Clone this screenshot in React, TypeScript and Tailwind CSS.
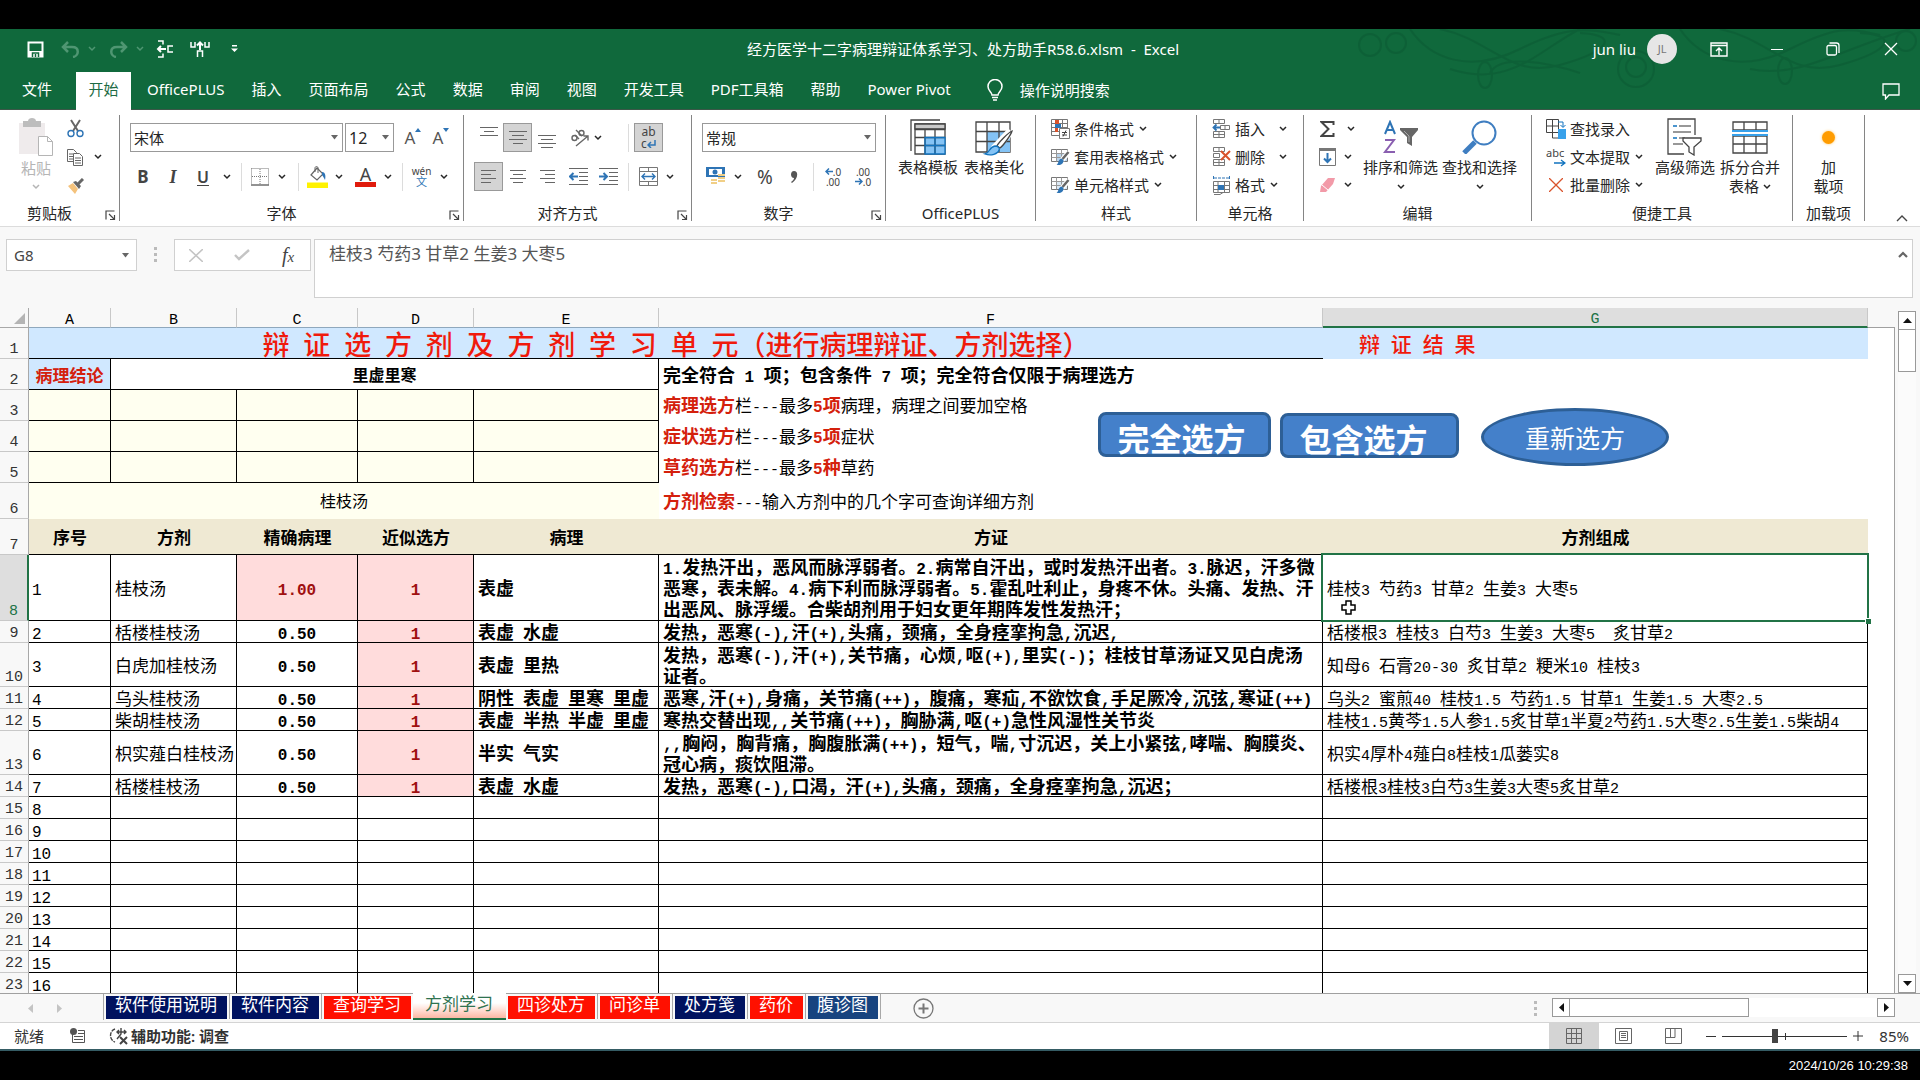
import React from "react";

/* ---------- shared pieces ---------- */

const Chevron = ({ className = "" }: { className?: string }) => (
  <svg className={`shrink-0 ${className}`} width="8" height="6" viewBox="0 0 8 6" fill="none" stroke="currentColor" strokeWidth="1.5">
    <path d="M1 1l3 3 3-3" />
  </svg>
);

const Triangle = ({ className = "" }: { className?: string }) => (
  <svg className={`pointer-events-none absolute ${className}`} width="7" height="5" viewBox="0 0 7 5" fill="#666">
    <path d="M0 0h7L3.500 4.500z" />
  </svg>
);

const Launcher = () => (
  <button aria-label="更多选项" className="flex h-3 w-3 items-center justify-center">
    <svg width="11" height="11" viewBox="0 0 11 11" fill="none" stroke="#444" strokeWidth="1.2">
      <path d="M1 9.500V1h8.500M4 4l5 5M9.500 5v4.500H5" />
    </svg>
  </button>
);

const Group = ({ className, label, launcher, children }: { className: string; label: string; launcher?: boolean; children: React.ReactNode }) => (
  <section aria-label={label} className={`flex h-[106px] shrink-0 flex-col border-r border-[#858585] ${className}`}>
    <div className="flex h-[88px]">{children}</div>
    <div className="flex flex-1 items-end">
      <span className="flex-1 whitespace-nowrap text-center leading-4 text-[#262626]">{label}</span>
      {launcher && (
        <span className="flex h-4 w-5 items-end justify-end pr-[3px]">
          <Launcher />
        </span>
      )}
    </div>
  </section>
);

const Tool = ({ label, className = "", children }: { label: string; className?: string; children: React.ReactNode }) => (
  <button aria-label={label} className={`flex shrink-0 items-center justify-center ${className}`}>
    {children}
  </button>
);

const RowButton = ({ icon, label, chevron }: { icon: React.ReactNode; label: string; chevron?: string }) => (
  <button className="flex h-7 items-center whitespace-nowrap">
    <span className="mr-1 flex w-5 justify-center">{icon}</span>
    {label}
    {chevron && <Chevron className={chevron} />}
  </button>
);

const Rule = ({ className = "" }: { className?: string }) => <span className={`h-7 w-px shrink-0 bg-[#dcdcdc] ${className}`} />;

const Lines = ({ rows, className = "" }: { rows: [number, number][]; className?: string }) => (
  <svg className={className} width="18" height="15" viewBox="0 0 18 15" stroke="#666" strokeWidth="1">
    {rows.map(([a, b], i) => (
      <path key={i} d={`M${a} ${i * 4 + 1.5}H${b}`} />
    ))}
  </svg>
);

/* ---------- icons ---------- */

const GridBrush = ({ shade }: { shade: string }) => (
  <svg width="20" height="20" viewBox="0 0 20 20" fill="none">
    <path d="M1.500 2.500h16v12h-16z" fill="#fff" stroke="#777" />
    <path d="M6 6h11v8H6z" fill={shade} />
    <path d="M1.500 6.500h16M1.500 10.500h16M6.500 2.500v12M11.500 2.500v12" stroke="#999" />
    <path d="M19 5l-7 8" stroke="#fff" strokeWidth="5" />
    <path d="M18.500 5l-6 7" stroke="#666" strokeWidth="2.500" />
    <path d="M11 11.500c2 .5 3 1.500 2.500 3-1 3-3.500 4-7 3.500 2-1 1.500-5 4.500-6.500z" fill="#2e74b5" />
  </svg>
);

const CellsIcon = ({ kind }: { kind: "insert" | "delete" | "format" }) => (
  <svg width="19" height="20" viewBox="0 0 19 20" fill="none" stroke="#777">
    {kind === "format" ? (
      <>
        <path d="M1.500 1v4M17.500 1v4M2 3h15" stroke="#2e74b5" strokeDasharray="3 1" />
        <path d="M1.500 6.500h16v11h-16zM1.500 10.500h16M1.500 14.500h16M6 6.500v11M12.500 6.500v11" />
        <path d="M6 10h6v5H6z" fill="#2e74b5" stroke="none" />
        <path d="M2 19.500h6l3-2" />
      </>
    ) : (
      <>
        <path d="M1.500 .5h11v4h-11zM7 .5v4M1.500 12.500h11v6h-11zM7 12.500v6M1.500 15.500h11" />
        {kind === "insert" ? (
          <>
            <path d="M8.500 6.500h9v4h-9zM13 6.500v4" />
            <path d="M8 8.500H2M4.500 5.500l-3 3 3 3" stroke="#2e74b5" strokeWidth="1.800" />
          </>
        ) : (
          <>
            <path d="M1.500 6.500h6v4h-6z" />
            <path d="M9 4l9 9M18 4l-9 9" stroke="#d9532c" strokeWidth="2" />
          </>
        )}
      </>
    )}
  </svg>
);

/* ---------- title bar and tabs ---------- */

const Flourish = () => (
  <svg className="absolute right-0 top-0" width="570" height="64" viewBox="0 0 570 64" fill="none" stroke="#0c5a33" strokeWidth="2" opacity=".55">
    <circle cx="20" cy="16" r="11" />
    <circle cx="46" cy="14" r="10" />
    <path d="M60 0c20 30 60 45 110 20S240 0 270 6M90 0c50 10 70 50 120 36s60-30 20-32M100 40c60 20 90-20 130-40M140 44c10-20 60-10 90 0" />
    <ellipse cx="135" cy="46" rx="7" ry="13" />
    <circle cx="286" cy="40" r="18" />
    <circle cx="286" cy="38" r="10" />
    <path d="M330 0c20 30 60 45 110 20S500 0 530 6M370 0c50 10 70 50 120 36s60-30 20-32M400 40c50 10 90-20 160-40" />
    <ellipse cx="435" cy="42" rx="7" ry="13" />
    <circle cx="556" cy="12" r="10" />
  </svg>
);

const TitleBar = () => (
  <div className="relative flex h-10 items-center text-white">
    <div className="flex flex-1 items-center pl-[26px]">
      <Tool label="保存" className="w-[18px]">
        <svg width="17" height="17" viewBox="0 0 17 17" fill="none" stroke="#fff" strokeWidth="2">
          <path d="M1.500 1.500h14v14h-14z" />
          <path d="M2 10h13v5H2z" fill="#fff" stroke="none" />
          <path d="M5.500 16v-4h6v4M8.500 13v3" stroke="#10693c" strokeWidth="1.500" />
        </svg>
      </Tool>
      <Tool label="撤消" className="ml-4 w-5 text-[#4f9672]">
        <svg width="19" height="17" viewBox="0 0 19 17" fill="none" stroke="currentColor" strokeWidth="2.500">
          <path d="M7 1L2 6l5 5M2 6h9c8 0 7 9 1 10" />
        </svg>
      </Tool>
      <Tool label="撤消列表" className="ml-2 w-2 text-[#4f9672]"><Chevron /></Tool>
      <Tool label="恢复" className="ml-3 w-5 text-[#4f9672]">
        <svg width="19" height="17" viewBox="0 0 19 17" fill="none" stroke="currentColor" strokeWidth="2.500">
          <path d="M12 1l5 5-5 5M17 6H8C0 6 1 15 7 16" />
        </svg>
      </Tool>
      <Tool label="恢复列表" className="ml-2 w-2 text-[#4f9672]"><Chevron /></Tool>
      <Tool label="插入单元格" className="ml-3 w-[18px]">
        <svg width="18" height="18" viewBox="0 0 18 18" fill="none" stroke="#fff" strokeWidth="1.500">
          <path d="M2 1h5v3.500M7 13.500V17H2M17 6h-5v6h5" />
          <path d="M10 9H2M5 6L2 9l3 3" strokeWidth="2" />
        </svg>
      </Tool>
      <Tool label="插入列" className="ml-4 w-5">
        <svg width="20" height="16" viewBox="0 0 20 16" fill="none" stroke="#fff" strokeWidth="1.500">
          <path d="M1 1v5h4V1M15 1v5h4V1M7.500 16v-6h5v6" />
          <path d="M10 9V2M7 4.500l3-3 3 3" strokeWidth="2" />
        </svg>
      </Tool>
      <Tool label="自定义快速访问工具栏" className="ml-[18px] w-3">
        <svg width="7" height="8" viewBox="0 0 7 8" fill="#fff">
          <path d="M1 0h5v1.500H1zM0 3.500h7L3.500 7z" />
        </svg>
      </Tool>
    </div>
    <h1 className="whitespace-pre">经方医学十二字病理辩证体系学习、处方助手R58.6.xlsm  -  Excel</h1>
    <div className="relative flex flex-1 items-center justify-end pr-5">
      <span>jun liu</span>
      <span className="ml-[11px] flex h-[30px] w-[30px] items-center justify-center rounded-full bg-[#e6e6e6] text-[11px] text-[#777]">JL</span>
      <Tool label="功能区显示选项" className="ml-[33px] w-[18px]">
        <svg width="18" height="15" viewBox="0 0 18 15" fill="none" stroke="#fff" strokeWidth="1.400">
          <path d="M1 1h16v13H1zM1 3.500h16M9 13V6M6 9l3-3 3 3" />
        </svg>
      </Tool>
      <Tool label="最小化" className="ml-10 w-[18px]"><span className="h-px w-3 bg-white" /></Tool>
      <Tool label="还原" className="ml-[38px] w-[18px]">
        <svg width="14" height="14" viewBox="0 0 14 14" fill="none" stroke="#fff" strokeWidth="1.300">
          <rect x="1" y="3.500" width="9.500" height="9.500" rx="1.500" />
          <path d="M3.500 1h7c1.500 0 2.500 1 2.500 2.500V11" />
        </svg>
      </Tool>
      <Tool label="关闭" className="ml-10 w-[18px]">
        <svg width="14" height="14" viewBox="0 0 14 14" stroke="#fff" strokeWidth="1.300">
          <path d="M1 1l12 12M13 1L1 13" />
        </svg>
      </Tool>
    </div>
  </div>
);

const menus = ["OfficePLUS", "插入", "页面布局", "公式", "数据", "审阅", "视图", "开发工具", "PDF工具箱", "帮助", "Power Pivot"];

const MenuTabs = () => (
  <nav className="relative mt-[3px] flex h-[38px] items-start whitespace-nowrap border-b border-[#3c5748] text-white">
    <button className="ml-[22px] h-[33px]">文件</button>
    <button className="ml-6 h-[38px] w-[55px] bg-white pb-[5px] text-[#1d6b44]">开始</button>
    <div className="ml-4 flex h-[33px] gap-[27px]">
      {menus.map((m) => (
        <button key={m}>{m}</button>
      ))}
    </div>
    <button className="ml-9 flex h-[35px] items-center gap-[17px]">
      <svg width="16" height="22" viewBox="0 0 16 22" fill="none" stroke="#fff" strokeWidth="1.500">
        <path d="M5 16c0-3-4-4-4-8.500a7 7 0 0 1 14 0C15 12 11 13 11 16zM5 18.500h6M6 21h4" />
      </svg>
      操作说明搜索
    </button>
    <button aria-label="批注" className="ml-auto mr-5 h-[38px]">
      <svg width="18" height="17" viewBox="0 0 18 17" fill="none" stroke="#fff" strokeWidth="1.300">
        <path d="M1 1h16v11H7l-3.500 4V12H1z" />
      </svg>
    </button>
  </nav>
);

/* ---------- ribbon ---------- */

const Clipboard = () => (
  <Group label="剪贴板" launcher className="w-[120px]">
    <button className="flex w-[58px] flex-col items-center pl-[14px] text-[#b5b5b5]">
      <svg className="mt-[3px]" width="36" height="38" viewBox="0 0 36 38">
        <path d="M1 5h26v31H1z" fill="#efebec" />
        <path d="M5 3h5c0-4 8-4 8 0h5v6H5z" fill="#bdbdbd" />
        <path d="M20.500 18.500h9l5 5v14h-14z" fill="#fff" stroke="#b5b5b5" />
        <path d="M29.500 18.500v5h5" fill="none" stroke="#b5b5b5" />
      </svg>
      <span className="mt-[2px] leading-5">粘贴</span>
      <Chevron className="mt-[6px]" />
    </button>
    <div className="flex flex-col pl-[7px]">
      <Tool label="剪切" className="h-[27px] w-5">
        <svg width="17" height="19" viewBox="0 0 17 19" fill="none">
          <path d="M4 1l7 11M13 1L6 12" stroke="#666" strokeWidth="2" />
          <circle cx="4" cy="14.500" r="3" stroke="#2e74b5" strokeWidth="1.400" />
          <circle cx="13" cy="14.500" r="3" stroke="#2e74b5" strokeWidth="1.400" />
        </svg>
      </Tool>
      <div className="flex h-[30px] items-center">
        <Tool label="复制" className="w-5">
          <svg width="18" height="19" viewBox="0 0 18 19" fill="#fff" stroke="#666">
            <path d="M1.500 1.500h6l3 3v9h-9zM3 6h4M3 8.500h4M3 11h4" />
            <path d="M7.500 5.500h6l3 3v9h-9zM9 10h6M9 12.500h6M9 15h6" />
          </svg>
        </Tool>
        <Chevron className="ml-[9px]" />
      </div>
      <Tool label="格式刷" className="h-7 w-5">
        <svg width="17" height="16" viewBox="0 0 17 16">
          <path d="M1 8l5-3 5 6-3 5z" fill="#f4c27c" />
          <path d="M6 4l3-1 5 5-2 3z" fill="#666" />
          <path d="M11 6l5-5" stroke="#666" strokeWidth="3" />
        </svg>
      </Tool>
    </div>
  </Group>
);

const FontGroup = () => (
  <Group label="字体" launcher className="w-[344px]">
    <div className="flex flex-col gap-[10px] pl-[10px] pt-2">
      <div className="flex h-[29px] items-center">
        <div className="relative">
          <select aria-label="字体" className="h-[29px] w-[213px] appearance-none border border-[#999] bg-white pl-[3px]">
            <option>宋体</option>
          </select>
          <Triangle className="right-[5px] top-3" />
        </div>
        <div className="relative ml-[2px]">
          <select aria-label="字号" className="h-[29px] w-[49px] appearance-none border border-[#999] bg-white pl-[3px] text-base">
            <option>12</option>
          </select>
          <Triangle className="right-[5px] top-3" />
        </div>
        <Tool label="增大字号" className="ml-[7px] w-6 items-start text-[17px] text-[#555]">
          A<svg width="6" height="4" viewBox="0 0 6 4" fill="#2e74b5"><path d="M0 4h6L3 0z" /></svg>
        </Tool>
        <Tool label="减小字号" className="ml-1 w-6 items-start text-[17px] text-[#555]">
          A<svg width="6" height="4" viewBox="0 0 6 4" fill="#2e74b5"><path d="M0 0h6L3 4z" /></svg>
        </Tool>
      </div>
      <div className="flex h-[29px] items-center">
        <Tool label="加粗" className="w-[26px] text-[17px] font-bold text-[#444]">B</Tool>
        <Tool label="倾斜" className="ml-1 w-[26px] font-[family-name:'Liberation_Serif',serif] text-lg font-bold italic text-[#444]">I</Tool>
        <Tool label="下划线" className="ml-1 w-[26px] text-base font-semibold text-[#444] underline underline-offset-2">U</Tool>
        <Chevron className="ml-[7px]" />
        <Rule className="ml-[10px]" />
        <Tool label="边框" className="ml-[9px] w-[18px]">
          <svg width="18" height="18" viewBox="0 0 18 18" fill="none" stroke="#777">
            <path d="M.5 .5h17v16M.5 .5v16M9 1v15M1 8.500h16" strokeDasharray="1 1" />
            <path d="M0 17h18" strokeWidth="1.600" />
          </svg>
        </Tool>
        <Chevron className="ml-[9px]" />
        <Rule className="ml-3" />
        <Tool label="填充颜色" className="ml-2 w-[21px]">
          <svg width="21" height="22" viewBox="0 0 21 22">
            <path d="M4 9l6-7 6 6-6 6z" fill="#fff" stroke="#666" strokeWidth="1.200" />
            <path d="M8 6V2c0-2 3-2 3 0v5" fill="none" stroke="#666" />
            <path d="M15 6c3 0 4 3 3 8-1-2-2-4-3-5z" fill="#2e74b5" />
            <path d="M0 16.500h21V22H0z" fill="#fff200" />
          </svg>
        </Tool>
        <Chevron className="ml-[7px]" />
        <Tool label="字体颜色" className="ml-3 w-[21px] flex-col text-lg leading-[16px] text-[#444]">
          A<span className="h-[5px] w-[21px] bg-[#e01b0c]" />
        </Tool>
        <Chevron className="ml-2" />
        <Rule className="ml-[10px]" />
        <Tool label="拼音指南" className="ml-2 w-[21px] flex-col text-[10px] leading-[10px] text-[#444]">
          wén<span className="text-[11px] leading-[12px] text-[#2e74b5]">文</span>
        </Tool>
        <Chevron className="ml-[8px]" />
      </div>
    </div>
  </Group>
);

const Indent = ({ out }: { out?: boolean }) => (
  <svg width="19" height="17" viewBox="0 0 19 17" fill="none" stroke="#666">
    <path d="M0 .5h19M10 4.500h9M10 8.500h9M10 12.500h9M0 16.500h19" />
    <path d={out ? "M9 8.500H1M4.500 5L1 8.500l3.500 3.500" : "M0 8.500h8M4.500 5L8 8.500 4.500 12"} stroke="#2e74b5" strokeWidth="2" />
  </svg>
);

const Alignment = () => (
  <Group label="对齐方式" launcher className="w-[228px]">
    <div className="flex flex-col gap-[10px] pl-[10px] pt-2">
      <div className="flex h-[29px] items-center">
        <Tool label="顶端对齐" className="h-[29px] w-[29px]"><Lines className="mb-2" rows={[[0, 18], [4, 14], [0, 18]]} /></Tool>
        <Tool label="垂直居中" className="h-[29px] w-[29px] border border-[#999] bg-[#d4d4d4]"><Lines rows={[[0, 18], [3, 15], [0, 18], [4, 14]]} /></Tool>
        <Tool label="底端对齐" className="h-[29px] w-[29px]"><Lines className="mt-2" rows={[[0, 18], [3, 15], [0, 18], [3, 15]]} /></Tool>
        <Tool label="方向" className="ml-2 w-[21px]">
          <svg width="20" height="20" viewBox="0 0 20 20" fill="none" stroke="#666" strokeWidth="1.400">
            <circle cx="4.500" cy="10" r="2.500" />
            <path d="M5 7l4 4M6 2l6 6" />
            <circle cx="11.500" cy="5" r="2.500" />
            <path d="M6 18L18 8M13.500 8H18v4.500" />
          </svg>
        </Tool>
        <Chevron className="ml-1" />
        <Rule className="ml-[26px]" />
        <Tool label="自动换行" className="ml-[5px] h-[29px] w-[29px] flex-col border border-[#999] bg-[#d4d4d4] text-[12px] leading-[12px] text-[#444]">
          <span>ab</span>
          <span className="flex items-center">
            c
            <svg width="9" height="8" viewBox="0 0 9 8" fill="none" stroke="#2e74b5" strokeWidth="1.500"><path d="M8 0v5H1M4 2L1 5l3 3" /></svg>
          </span>
        </Tool>
      </div>
      <div className="flex h-[29px] items-center">
        <Tool label="左对齐" className="h-[29px] w-[29px] border border-[#999] bg-[#d4d4d4]"><Lines rows={[[1, 16], [1, 11], [1, 16], [1, 11]]} /></Tool>
        <Tool label="居中" className="h-[29px] w-[29px]"><Lines rows={[[1, 17], [4, 14], [1, 17], [4, 14]]} /></Tool>
        <Tool label="右对齐" className="h-[29px] w-[29px]"><Lines rows={[[2, 17], [7, 17], [2, 17], [7, 17]]} /></Tool>
        <Tool label="减少缩进量" className="ml-2 w-[19px]"><Indent out /></Tool>
        <Tool label="增加缩进量" className="ml-[11px] w-[19px]"><Indent /></Tool>
        <Rule className="ml-[10px]" />
        <Tool label="合并后居中" className="ml-[10px] w-[19px]">
          <svg width="19" height="19" viewBox="0 0 19 19" fill="none" stroke="#777">
            <path d="M.5 .5h18v18H.5zM.5 4.500h18M.5 14.500h18M9.500 .5v4M9.500 14.500v4" />
            <path d="M3 9.500h13M6 6.500l-3 3 3 3M13 6.500l3 3-3 3" stroke="#2e74b5" strokeWidth="1.400" />
          </svg>
        </Tool>
        <Chevron className="ml-2" />
      </div>
    </div>
  </Group>
);

const NumberGroup = () => (
  <Group label="数字" launcher className="w-[194px]">
    <div className="flex flex-col gap-[10px] pl-[10px] pt-2">
      <div className="relative">
        <select aria-label="数字格式" className="h-[29px] w-[174px] appearance-none border border-[#999] bg-white pl-[3px]">
          <option>常规</option>
        </select>
        <Triangle className="right-[5px] top-3" />
      </div>
      <div className="flex h-[29px] items-center">
        <Tool label="会计数字格式" className="ml-1 w-5">
          <svg width="20" height="19" viewBox="0 0 20 19">
            <path d="M0 0h19v10H0z" fill="#2e74b5" />
            <path d="M3 2h13v6H3z" fill="#fff" />
            <circle cx="9" cy="5" r="2.500" fill="#2e74b5" />
            <path d="M12 8h7M12 11h7M12 14h7M5 13h6M5 16h6" stroke="#f1cf86" strokeWidth="2" />
          </svg>
        </Tool>
        <Chevron className="ml-2" />
        <Tool label="百分比样式" className="ml-3 w-[22px] text-[19px] text-[#444]">%</Tool>
        <Tool label="千位分隔样式" className="ml-2 w-5">
          <svg width="8" height="12" viewBox="0 0 8 12" fill="#555"><path d="M4 0c5 0 4 8-2 12l-1-1c2-1 3-3 3-4C0 7 0 0 4 0z" /></svg>
        </Tool>
        <Rule className="ml-[9px]" />
        <Tool label="增加小数位数" className="ml-[10px] w-[18px] flex-col text-[10px] leading-[10px] text-[#444]">
          <span className="flex items-center"><svg width="8" height="7" viewBox="0 0 8 7" fill="none" stroke="#2e74b5" strokeWidth="1.500"><path d="M8 3.500H1M4 .5l-3 3 3 3" /></svg>.0</span>
          <span>.00</span>
        </Tool>
        <Tool label="减少小数位数" className="ml-3 w-[18px] flex-col text-[10px] leading-[10px] text-[#444]">
          <span>.00</span>
          <span className="flex items-center"><svg width="8" height="7" viewBox="0 0 8 7" fill="none" stroke="#2e74b5" strokeWidth="1.500"><path d="M0 3.500h7M4 .5l3 3-3 3" /></svg>.0</span>
        </Tool>
      </div>
    </div>
  </Group>
);

const Big = ({ icon, lines, chevron, className = "" }: { icon: React.ReactNode; lines: string[]; chevron?: "below" | "inline"; className?: string }) => (
  <button className={`flex flex-col items-center whitespace-nowrap ${className}`}>
    <span className="mb-[2px] mt-[3px] flex h-[38px] items-center">{icon}</span>
    {lines.map((l, i) => (
      <span key={l} className="flex items-center gap-1 leading-[19px]">
        {l}
        {chevron === "inline" && i === lines.length - 1 && <Chevron />}
      </span>
    ))}
    {chevron === "below" && <Chevron className="mt-[7px]" />}
  </button>
);

const OfficePlus = () => (
  <Group label="OfficePLUS" className="w-[150px]">
    <div className="flex gap-[6px] pl-3">
      <Big
        lines={["表格模板"]}
        icon={
          <svg width="36" height="36" viewBox="0 0 36 36" fill="none" stroke="#444" strokeWidth="1.300">
            <path d="M1 32V1h29" />
            <path d="M5 5h30v30H5z" fill="#fff" />
            <path d="M5 5h30v5H5z" fill="#c9c9c9" />
            <path d="M15 18h20v17H15z" fill="#84c3f5" stroke="none" />
            <path d="M5 10.500h30M5 18.500h30M5 26.500h30M15 10v25M25 10v25" />
            <path d="M15 18.500h20V35H15zM15 26.500h20M25 18v17" stroke="#1073bf" />
          </svg>
        }
      />
      <Big
        lines={["表格美化"]}
        icon={
          <svg width="38" height="38" viewBox="0 0 38 38" fill="none" stroke="#444" strokeWidth="1.300">
            <path d="M1 4h34v30H1z" fill="#fff" />
            <path d="M12 13h23v21H12z" fill="#84c3f5" stroke="none" />
            <path d="M1 13.500h34M1 23.500h34M12 4v30M24 4v30" />
            <path d="M36 13L19 31" stroke="#fff" strokeWidth="8" />
            <path d="M37 13c-3 1-14 12-15 15l3 2c3-2 11-13 12-17z" fill="#fff" />
            <path d="M20 28c3 0 5 2 4 4-1 4-8 6-14 4 5-1 4-7 10-8z" fill="#84c3f5" stroke="#1073bf" />
          </svg>
        }
      />
    </div>
  </Group>
);

const Styles = () => (
  <Group label="样式" className="w-[161px]">
    <div className="flex flex-col pl-[14px]">
      <RowButton
        label="条件格式"
        chevron="ml-[5px]"
        icon={
          <svg width="20" height="20" viewBox="0 0 20 20" fill="none" stroke="#777">
            <path d="M1.500 .5h16v16h-16zM1.500 4.500h16M1.500 8.500h16M1.500 12.500h16M12.500 .5v16" />
            <path d="M5 1h4v4H5z" fill="#d9532c" stroke="none" />
            <path d="M5 5h6v4H5z" fill="#2e74b5" stroke="none" />
            <path d="M5 9h3v4H5z" fill="#d9532c" stroke="none" />
            <path d="M9.500 9.500h10v10h-10z" fill="#fff" />
            <path d="M12 13.500h5M12 16h5M16 11.500l-3 6" stroke="#444" />
          </svg>
        }
      />
      <RowButton label="套用表格格式" chevron="ml-[5px]" icon={<GridBrush shade="#b9d3ea" />} />
      <RowButton label="单元格样式" chevron="ml-[5px]" icon={<GridBrush shade="#dbe9f5" />} />
    </div>
  </Group>
);

const Cells = () => (
  <Group label="单元格" className="w-[107px]">
    <div className="flex flex-col pl-[14px]">
      <RowButton label="插入" chevron="ml-[14px]" icon={<CellsIcon kind="insert" />} />
      <RowButton label="删除" chevron="ml-[14px]" icon={<CellsIcon kind="delete" />} />
      <RowButton label="格式" chevron="ml-[5px]" icon={<CellsIcon kind="format" />} />
    </div>
  </Group>
);

const Editing = () => (
  <Group label="编辑" className="w-[228px]">
    <div className="flex w-[57px] flex-col pl-3">
      <Tool label="自动求和" className="h-7 !justify-start gap-3">
        <svg className="ml-1" width="15" height="16" viewBox="0 0 15 16" fill="none" stroke="#444" strokeWidth="2"><path d="M13.500 4V1H1.500l7 7-7 7h12v-3" /></svg>
        <Chevron />
      </Tool>
      <Tool label="填充" className="h-7 !justify-start gap-2">
        <svg className="ml-[3px]" width="17" height="18" viewBox="0 0 17 18" fill="none">
          <path d="M.5 .5h16v17H.5z" stroke="#777" />
          <path d="M0 1.500h17" stroke="#777" strokeWidth="3" />
          <path d="M8.500 5v9M5 10.500L8.500 14l3.500-3.500" stroke="#2e74b5" strokeWidth="2" />
        </svg>
        <Chevron />
      </Tool>
      <Tool label="清除" className="h-7 !justify-start gap-2">
        <svg className="ml-[3px]" width="17" height="16" viewBox="0 0 17 16"><path d="M9 1h7l-2 6-7 8H1l1-6z" fill="#f29aa8" /><path d="M3 8l6 5" stroke="#fff" /></svg>
        <Chevron />
      </Tool>
    </div>
    <div className="flex gap-1 pl-[2px]">
      <Big
        lines={["排序和筛选"]}
        chevron="below"
        icon={
          <svg width="36" height="34" viewBox="0 0 36 34" fill="none">
            <path d="M2 14L7 2l5 12M3.500 10h7" stroke="#2e74b5" strokeWidth="2" />
            <path d="M2 20h9L2 32h10" stroke="#8a5fb0" strokeWidth="2" />
            <path d="M17 8h18v2l-6 7v9l-5-3v-6l-7-7z" fill="#666" />
            <path d="M21 11l5 5v6" stroke="#aaa" />
          </svg>
        }
      />
      <Big
        lines={["查找和选择"]}
        chevron="below"
        icon={
          <svg width="36" height="34" viewBox="0 0 36 34" fill="none" stroke="#3f7ec1">
            <circle cx="22" cy="13" r="11.500" strokeWidth="2" />
            <path d="M13 22L2 33" strokeWidth="5" />
          </svg>
        }
      />
    </div>
  </Group>
);

const Tools = () => (
  <Group label="便捷工具" className="w-[261px]">
    <div className="flex w-[115px] flex-col pl-[14px]">
      <RowButton
        label="查找录入"
        icon={
          <svg width="20" height="20" viewBox="0 0 20 20" fill="none" stroke="#444">
            <path d="M.5 .5h12v13H.5zM6.500 .5v13M.5 7h12" />
            <path d="M12 10h8v10h-8z" fill="#38a1ea" stroke="none" />
            <path d="M6.500 14v5H12" />
            <path d="M12 3h5v5M14.500 6L17 8.500 19.500 6" stroke="#1073bf" />
          </svg>
        }
      />
      <RowButton
        label="文本提取"
        chevron="ml-[5px]"
        icon={
          <span className="relative h-5 w-5 text-left text-[11px] leading-[12px] text-[#444]">
            abc
            <svg className="absolute bottom-0 right-0" width="12" height="8" viewBox="0 0 12 8" fill="none" stroke="#1073bf" strokeWidth="1.300"><path d="M0 4h11M7 1l4 3-4 3" /></svg>
          </span>
        }
      />
      <RowButton
        label="批量删除"
        chevron="ml-[5px]"
        icon={<svg width="14" height="14" viewBox="0 0 14 14" stroke="#d9532c" strokeWidth="1.300"><path d="M0 0l14 14M14 0L0 14" /></svg>}
      />
    </div>
    <div className="flex gap-[5px] pl-2">
      <Big
        lines={["高级筛选"]}
        icon={
          <svg width="36" height="38" viewBox="0 0 36 38" fill="none" stroke="#444" strokeWidth="1.300">
            <path d="M17 36H1V1h27v16" />
            <path d="M6 8h4M6 20h4" stroke="#1073bf" />
            <path d="M12 8h12M6 14h18M12 20h6M6 26h10" stroke="#777" />
            <path d="M16 20h18v3l-7 6v8l-5-3v-5l-6-6z" fill="#fff" />
          </svg>
        }
      />
      <Big
        lines={["拆分合并", "表格"]}
        chevron="inline"
        icon={
          <svg width="36" height="34" viewBox="0 0 36 34" fill="none" stroke="#444" strokeWidth="1.300">
            <path d="M1 2h34v8H1zM12 2v8M24 2v8M1 16h34v17H1zM12 16v17M24 16v17M1 24h34" />
            <path d="M0 11h36M0 15h36" stroke="#38a1ea" strokeWidth="2" />
          </svg>
        }
      />
    </div>
  </Group>
);

const Ribbon = () => (
  <div className="flex h-[117px] border-b border-[#dcdcdc] bg-white pt-[5px] text-[#262626]">
    <Clipboard />
    <FontGroup />
    <Alignment />
    <NumberGroup />
    <OfficePlus />
    <Styles />
    <Cells />
    <Editing />
    <Tools />
    <Group label="加载项" className="w-[72px]">
      <Big className="w-full" lines={["加", "载项"]} icon={<span className="h-[13px] w-[13px] rounded-full bg-[#ff9c00] shadow-[0_0_3px_#ffc766]" />} />
    </Group>
    <button aria-label="折叠功能区" className="ml-auto mr-[12px] mt-auto h-4">
      <svg width="12" height="8" viewBox="0 0 12 8" fill="none" stroke="#444" strokeWidth="1.400"><path d="M1 7l5-5 5 5" /></svg>
    </button>
  </div>
);

/* ---------- formula bar ---------- */

const Dots = () => (
  <span className="flex flex-col gap-[3px]">
    <i className="h-[3px] w-[3px] bg-[#bbb]" />
    <i className="h-[3px] w-[3px] bg-[#bbb]" />
    <i className="h-[3px] w-[3px] bg-[#bbb]" />
  </span>
);

const FormulaBar = () => (
  <div className="flex h-[81px] items-start bg-[#f8f8f8] pl-[6px] pr-[7px] pt-3">
    <div className="relative">
      <input aria-label="名称框" readOnly value="G8" className="h-8 w-[131px] border border-[#d0d0d0] bg-white pl-[7px] text-[15px] text-[#444]" />
      <Triangle className="right-2 top-[14px]" />
    </div>
    <div className="ml-[17px] mt-2"><Dots /></div>
    <div className="ml-[17px] flex h-8 w-[137px] items-center justify-between border border-[#d0d0d0] bg-white px-[13px]">
      <Tool label="取消" className="w-4"><svg width="14" height="13" viewBox="0 0 14 13" stroke="#c4c4c4" strokeWidth="1.600"><path d="M0 0l14 13M14 0L0 13" /></svg></Tool>
      <Tool label="输入" className="w-4"><svg width="16" height="12" viewBox="0 0 16 12" fill="none" stroke="#c4c4c4" strokeWidth="2.400"><path d="M1 6l4 4L15 1" /></svg></Tool>
      <Tool label="插入函数" className="w-[18px] font-[family-name:'Liberation_Serif',serif] text-[20px] italic leading-none text-[#444]">f<span className="mt-1 text-[15px]">x</span></Tool>
    </div>
    <div className="relative ml-[3px] flex-1">
      <textarea
        aria-label="编辑栏"
        readOnly
        value="桂枝3 芍药3 甘草2 生姜3 大枣5"
        className="block h-[59px] w-full resize-none border border-[#d0d0d0] bg-white py-[2px] pl-[14px] font-[family-name:'Noto_Sans','Noto_Sans_CJK_SC',sans-serif] text-[17px] leading-6 text-[#555]"
      />
      <button aria-label="折叠编辑栏" className="absolute right-[5px] top-3 flex h-[7px]">
        <svg width="10" height="7" viewBox="0 0 10 7" fill="none" stroke="#666" strokeWidth="2.200"><path d="M1 6l4-4 4 4" /></svg>
      </button>
    </div>
  </div>
);

/* ---------- worksheet ---------- */

/* Han text keeps the cell's size; half-width runs use a monospace face. */
const Mixed = ({ text, ascii = "text-[15px]" }: { text: string; ascii?: string }) => (
  <>
    {text.split(/([\x20-\x7e]+)/).map((part, i) =>
      i % 2 ? (
        <span key={i} className={`font-[family-name:'Liberation_Mono',monospace] ${ascii} leading-[0px]`}>{part}</span>
      ) : (
        part
      )
    )}
  </>
);

type Row = { h: string; name: string; exact: string; near: string; path: string; sign: string[]; mix: string };

const rows: Row[] = [
  {
    h: "h-[66px]", name: "桂枝汤", exact: "1.00", near: "1", path: "表虚",
    sign: ["1.发热汗出，恶风而脉浮弱者。2.病常自汗出，或时发热汗出者。3.脉迟，汗多微", "恶寒，表未解。4.病下利而脉浮弱者。5.霍乱吐利止，身疼不休。头痛、发热、汗", "出恶风、脉浮缓。合柴胡剂用于妇女更年期阵发性发热汗；"],
    mix: "桂枝3 芍药3 甘草2 生姜3 大枣5",
  },
  { h: "h-[22px]", name: "栝楼桂枝汤", exact: "0.50", near: "1", path: "表虚 水虚", sign: ["发热，恶寒(-),汗(+),头痛，颈痛，全身痉挛拘急,沉迟,"], mix: "栝楼根3 桂枝3 白芍3 生姜3 大枣5  炙甘草2" },
  { h: "h-[44px]", name: "白虎加桂枝汤", exact: "0.50", near: "1", path: "表虚 里热", sign: ["发热，恶寒(-),汗(+),关节痛，心烦,呕(+),里实(-)；桂枝甘草汤证又见白虎汤", "证者。"], mix: "知母6 石膏20-30 炙甘草2 粳米10 桂枝3" },
  { h: "h-[22px]", name: "乌头桂枝汤", exact: "0.50", near: "1", path: "阴性 表虚 里寒 里虚", sign: ["恶寒,汗(+),身痛，关节痛(++)，腹痛，寒疝,不欲饮食,手足厥冷,沉弦,寒证(++)"], mix: "乌头2 蜜煎40 桂枝1.5 芍药1.5 甘草1 生姜1.5 大枣2.5" },
  { h: "h-[22px]", name: "柴胡桂枝汤", exact: "0.50", near: "1", path: "表虚 半热 半虚 里虚", sign: ["寒热交替出现,,关节痛(++)，胸胁满,呕(+)急性风湿性关节炎"], mix: "桂枝1.5黄芩1.5人参1.5炙甘草1半夏2芍药1.5大枣2.5生姜1.5柴胡4" },
  { h: "h-[44px]", name: "枳实薤白桂枝汤", exact: "0.50", near: "1", path: "半实 气实", sign: [",,胸闷，胸背痛，胸腹胀满(++)，短气，喘,寸沉迟，关上小紧弦,哮喘、胸膜炎、", "冠心病，痰饮阻滞。"], mix: "枳实4厚朴4薤白8桂枝1瓜蒌实8" },
  { h: "h-[22px]", name: "栝楼桂枝汤", exact: "0.50", near: "1", path: "表虚 水虚", sign: ["发热，恶寒(-),口渴，汗(+),头痛，颈痛，全身痉挛拘急,沉迟；"], mix: "栝楼根3桂枝3白芍3生姜3大枣5炙甘草2" },
  ...Array.from({ length: 9 }, () => ({ h: "h-[22px]", name: "", exact: "", near: "", path: "", sign: [], mix: "" })),
];

const Head = ({ n, on }: { n: number; on?: boolean }) => (
  <th
    scope="row"
    className={`border-b p-0 text-center align-bottom font-[family-name:'Liberation_Mono',monospace] text-[15px] font-normal leading-[16px] ${
      on ? "border-b-[#c8c8c8] border-r-2 border-r-[#217346] bg-[#dedede] text-[#217346]" : "border-b-[#c8c8c8] border-r border-r-[#a8a8a8] bg-[#f8f8f8] text-[#333]"
    }`}
  >
    {n}
  </th>
);

const hints: { key: string; rest: string; strong?: string; tail?: string }[] = [
  { key: "病理选方", rest: "栏---最多", strong: "5项", tail: "病理，病理之间要加空格" },
  { key: "症状选方", rest: "栏---最多", strong: "5项", tail: "症状" },
  { key: "草药选方", rest: "栏---最多", strong: "5种", tail: "草药" },
  { key: "方剂检索", rest: "---输入方剂中的几个字可查询详细方剂" },
];

const Hint = ({ i }: { i: number }) => {
  const h = hints[i];
  return (
    <td className="whitespace-nowrap px-1 pb-[2px] pt-0">
      <b className="text-[18px] text-[#d4200c]">{h.key}</b>
      <Mixed text={h.rest} />
      {h.strong && <b className="text-[18px] text-[#d4200c]"><Mixed ascii="text-[16px]" text={h.strong} /></b>}
      {h.tail}
    </td>
  );
};

const ShapeButtons = () => (
  <div className="absolute -left-[225px] top-[18px] flex h-[58px] items-start text-white">
    <button className="mt-1 flex h-[45px] w-[173px] items-end justify-center rounded-lg border-[3px] border-[#2d5f96] bg-[#4480ca] pr-[6px] text-[32px] font-bold leading-[34px]">完全选方</button>
    <button className="ml-[9px] mt-[5px] flex h-[45px] w-[179px] items-end justify-center rounded-lg border-[3px] border-[#2d5f96] bg-[#4480ca] pr-3 text-[32px] font-bold leading-[34px]">包含选方</button>
    <button className="ml-[22px] h-[58px] w-[188px] rounded-[50%] border-[3px] border-[#2d5f96] bg-[#4480ca] text-[25px]">重新选方</button>
  </div>
);

const cell = "whitespace-pre border-b border-r border-black p-0 leading-[21px]";

const Sheet = () => (
  <table className="w-full table-fixed border-separate border-spacing-0 bg-white font-[family-name:'Noto_Sans_CJK_SC',sans-serif] text-[17px] leading-[21px] text-black">
    <colgroup>
      <col className="w-[29px]" />
      <col className="w-[82px]" />
      <col className="w-[126px]" />
      <col className="w-[121px]" />
      <col className="w-[116px]" />
      <col className="w-[185px]" />
      <col />
      <col className="w-[545px]" />
    </colgroup>
    <thead>
      <tr className="h-5 bg-[#f8f8f8] font-[family-name:'Liberation_Mono',monospace] text-[15px] leading-[13px]">
        <td className="border-b border-r border-[#a8a8a8] p-0">
          <svg className="ml-[14px] mt-[2px]" width="11" height="11" viewBox="0 0 11 11" fill="#b4b4b4"><path d="M11 0v11H0z" /></svg>
        </td>
        {["A", "B", "C", "D", "E", "F"].map((c) => (
          <th key={c} scope="col" className="border-b border-r border-b-[#8fa8bd] border-r-[#c8c8c8] p-0 align-bottom font-normal">{c}</th>
        ))}
        <th scope="col" className="border-b-2 border-r border-b-[#217346] border-r-[#c8c8c8] bg-[#dedede] p-0 align-bottom font-normal text-[#217346]">G</th>
      </tr>
    </thead>
    <tbody>
      <tr className="h-[31px]">
        <Head n={1} />
        <td colSpan={6} className="whitespace-pre border-b border-black bg-[#d0e8ff] p-0 text-center text-[27px] font-medium leading-[29px] text-[#f01a0c]">
          <Mixed ascii="text-[23px]" text="辩 证 选 方 剂 及 方 剂 学 习 单 元（进行病理辩证、方剂选择）" />
        </td>
        <td className="whitespace-pre bg-[#d0e8ff] py-0 pl-9 pr-0 text-[21px] font-medium text-[#f01a0c]">
          <Mixed ascii="text-[18px]" text="辩 证 结 果" />
        </td>
      </tr>
      <tr className="h-[31px]">
        <Head n={2} />
        <td className="border-b border-r border-black bg-[#d0e8ff] p-0 text-center font-bold text-[#d4200c]">病理结论</td>
        <td colSpan={4} className="border-b border-r border-black p-0 text-center text-[16px] font-bold">里虚里寒</td>
        <td className="whitespace-pre px-1 py-0 text-[18px] font-bold"><Mixed ascii="text-[16px]" text="完全符合 1 项；包含条件 7 项；完全符合仅限于病理选方" /></td>
        <td />
      </tr>
      {[0, 1, 2].map((i) => (
        <tr key={i} className="h-[31px]">
          <Head n={i + 3} />
          {[0, 1, 2, 3, 4].map((c) => (
            <td key={c} className="border-b border-r border-black bg-[#fffff0] p-0" />
          ))}
          <Hint i={i} />
          <td className="relative p-0">{i === 0 && <ShapeButtons />}</td>
        </tr>
      ))}
      <tr className="h-[36px]">
        <Head n={6} />
        <td colSpan={5} className="bg-[#fffff0] px-0 pb-[2px] pt-0 text-center text-[16px]">桂枝汤</td>
        <Hint i={3} />
        <td />
      </tr>
      <tr className="h-[36px]">
        <Head n={7} />
        {["序号", "方剂", "精确病理", "近似选方", "病理", "方证", "方剂组成"].map((t) => (
          <td key={t} className="border-b border-black bg-[#efe9d3] p-0 text-center font-bold">{t}</td>
        ))}
      </tr>
      {rows.map((r, i) => (
        <tr key={i} className={r.h}>
          <Head n={i + 8} on={i === 0} />
          <td className={`${cell} pl-[3px]`}><Mixed ascii="text-[16px]" text={String(i + 1)} /></td>
          <td className={`${cell} pl-1`}>{r.name}</td>
          <td className={`${cell} text-center font-bold ${i === 0 ? "bg-[#ffdcdc] text-[#a01010]" : ""}`}><Mixed ascii="text-[16px]" text={r.exact} /></td>
          <td className={`${cell} text-center font-bold ${r.near ? "bg-[#ffdcdc] text-[#a01010]" : ""}`}><Mixed ascii="text-[16px]" text={r.near} /></td>
          <td className={`${cell} pl-1 text-[18px] font-bold`}><Mixed text={r.path} /></td>
          <td className={`${cell} pl-1 text-[18px] font-bold`}>
            {r.sign.map((s) => (
              <div key={s}><Mixed ascii="text-[16px]" text={s} /></div>
            ))}
          </td>
          <td className={`${cell} relative pl-1`}>
            <Mixed text={r.mix} />
            {i === 0 && (
              <>
                <span className="pointer-events-none absolute -bottom-[2px] -left-[2px] -right-[2px] -top-[2px] z-10 border-2 border-[#217346]" />
                <span className="absolute -bottom-1 -right-1 z-20 h-[6px] w-[6px] border-l border-t border-white bg-[#217346]" />
                <svg className="absolute left-[18px] top-[45px]" width="16" height="16" viewBox="0 0 16 16" fill="#fff" stroke="#000" strokeWidth="1.500">
                  <path d="M5 1h5v4h4v5h-4v4H5v-4H1V5h4z" />
                </svg>
              </>
            )}
          </td>
        </tr>
      ))}
    </tbody>
  </table>
);

const ArrowBox = ({ label, d, className = "" }: { label: string; d: string; className?: string }) => (
  <button aria-label={label} className={`flex h-[19px] w-[18px] shrink-0 items-center justify-center border border-[#999] bg-white ${className}`}>
    <svg width="9" height="9" viewBox="0 0 9 9" fill="#111"><path d={d} /></svg>
  </button>
);

const Worksheet = () => (
  <main className="flex min-h-0 flex-1 overflow-hidden bg-[#f8f8f8]">
    <div className="min-w-0 flex-1"><Sheet /></div>
    <div className="mt-[19px] w-[27px] border-r border-t border-[#a0a0a0] bg-white" />
    <div className="flex w-[25px] flex-col pl-[3px] pt-[3px]">
      <ArrowBox label="向上滚动" d="M0 7h9L4.500 2z" />
      <div className="-mt-px h-[43px] w-[18px] border border-[#999] bg-white" />
      <div className="w-[18px] flex-1 bg-[#fbfbfb]" />
      <ArrowBox label="向下滚动" d="M0 2h9L4.500 7z" />
    </div>
  </main>
);

/* ---------- sheet tabs and status bar ---------- */

const navy = "bg-[#00125f]";
const red = "bg-[#ff1000]";
const sheets: [string, string][] = [
  ["软件使用说明", navy],
  ["软件内容", navy],
  ["查询学习", red],
  ["方剂学习", ""],
  ["四诊处方", red],
  ["问诊单", red],
  ["处方笺", navy],
  ["药价", red],
  ["腹诊图", "bg-[#17437f]"],
];

const SheetTabs = () => (
  <div className="flex h-[29px] items-start border-t border-[#a0a0a0] bg-[#f8f8f8]">
    <div className="flex h-7 w-[103px] shrink-0 items-center gap-6 pl-[28px]">
      <button aria-label="上一张工作表"><svg width="5" height="9" viewBox="0 0 5 9" fill="#c4c4c4"><path d="M5 0v9L0 4.500z" /></svg></button>
      <button aria-label="下一张工作表"><svg width="5" height="9" viewBox="0 0 5 9" fill="#c4c4c4"><path d="M0 0v9l5-4.500z" /></svg></button>
    </div>
    <div className="flex items-start gap-[2px] border-l border-[#a8a8a8] pl-[2px]">
      {sheets.map(([name, color]) =>
        color ? (
          <span key={name} className="flex border-r border-[#a8a8a8] pr-[2px] pt-[2px]">
            <button className={`h-[23px] whitespace-nowrap pl-[9px] pr-[10px] text-[17px] leading-[17px] text-white ${color}`}>
              <span className="block h-[23px]">{name}</span>
            </button>
          </span>
        ) : (
          <button
            key={name}
            aria-current="page"
            className="-ml-[3px] -mt-px h-[27px] whitespace-nowrap border-b-2 border-[#217346] bg-gradient-to-b from-white from-40% to-[#fbb7a4] pl-3 pr-[13px] text-[17px] leading-[21px] text-[#2f7350]"
          >
            <span className="block h-[25px]">{name}</span>
          </button>
        )
      )}
    </div>
    <button aria-label="新工作表" className="ml-8 mt-1">
      <svg width="21" height="21" viewBox="0 0 21 21" fill="none" stroke="#777">
        <circle cx="10.500" cy="10.500" r="9.500" strokeWidth="1.300" />
        <path d="M10.500 5.500v10M5.500 10.500h10" strokeWidth="2" />
      </svg>
    </button>
    <div className="ml-auto mt-[7px]"><Dots /></div>
    <div className="ml-[15px] mr-[25px] mt-1 flex h-[19px] w-[343px]">
      <ArrowBox label="向左滚动" d="M7 0v9L2 4.500z" />
      <div className="-ml-px h-[19px] w-[180px] border border-[#999] bg-white" />
      <div className="flex-1 bg-white" />
      <ArrowBox label="向右滚动" d="M2 0v9l5-4.500z" />
    </div>
  </div>
);

const StatusBar = () => (
  <footer className="flex h-[29px] items-center border-b-2 border-t border-b-[#355c64] border-t-[#d4d4d4] bg-white text-[#333]">
    <span className="ml-[14px]">就绪</span>
    <button aria-label="录制宏" className="ml-[26px]">
      <svg width="15" height="16" viewBox="0 0 15 16" fill="none" stroke="#555">
        <path d="M2.500 4.500v10h12v-12H8M8 5.500h6M4 8.500h9M4 11.500h9" />
        <circle cx="3.500" cy="3.500" r="3.500" fill="#555" stroke="none" />
      </svg>
    </button>
    <button className="ml-6 flex items-center gap-[3px] font-semibold">
      <svg width="19" height="18" viewBox="0 0 19 18" fill="none" stroke="#444" strokeWidth="1.400">
        <path d="M6 2C0 4 0 13 6 15" strokeDasharray="4 1" />
        <path d="M8 5h9M12 1v6l-4 5M10 3L8 5l2 2M15 3l2 2-2 2" />
        <path d="M11 10l7 7M18 10l-7 7" strokeWidth="2" />
      </svg>
      辅助功能: 调查
    </button>
    <div className="ml-auto flex h-full items-center">
      <Tool label="普通" className="h-full w-[50px] bg-[#d4d4d4]">
        <svg width="16" height="16" viewBox="0 0 16 16" fill="none" stroke="#666"><path d="M.5 .5h15v15H.5zM.5 5.500h15M.5 10.500h15M5.500 .5v15M10.500 .5v15" /></svg>
      </Tool>
      <Tool label="页面布局视图" className="h-full w-[49px]">
        <svg width="17" height="16" viewBox="0 0 17 16" fill="none" stroke="#666"><path d="M.5 .5h16v15H.5zM4.500 3.500h8v9h-8zM6 5.500h5M6 7.500h5M6 9.500h5" /></svg>
      </Tool>
      <Tool label="分页预览" className="h-full w-[50px]">
        <svg width="17" height="16" viewBox="0 0 17 16" fill="none" stroke="#666"><path d="M.5 .5h16v15H.5zM.5 9.500h9.500V.5M5.500 .5v9" /></svg>
      </Tool>
      <Tool label="缩小" className="ml-2 w-[10px]"><span className="h-px w-[10px] bg-[#333]" /></Tool>
      <div className="relative ml-[6px] flex h-4 w-[125px] items-center">
        <input
          type="range"
          aria-label="缩放"
          min={0}
          max={100}
          defaultValue={42}
          className="h-px w-full appearance-none bg-[#333] [&::-webkit-slider-thumb]:h-[14px] [&::-webkit-slider-thumb]:w-[6px] [&::-webkit-slider-thumb]:appearance-none [&::-webkit-slider-thumb]:bg-[#444]"
        />
        <span className="absolute left-1/2 h-[7px] w-px bg-[#333]" />
      </div>
      <Tool label="放大" className="ml-[6px] w-[10px]">
        <svg width="10" height="10" viewBox="0 0 10 10" stroke="#333"><path d="M5 0v10M0 5h10" /></svg>
      </Tool>
      <span className="ml-4 mr-[11px]">85%</span>
    </div>
  </footer>
);

export default function App() {
  return (
    <div className="flex h-screen min-h-[720px] flex-col overflow-hidden bg-black pt-[29px] font-[family-name:'Noto_Sans','Noto_Sans_CJK_SC',sans-serif] text-[15px] leading-5">
      <header className="relative h-[81px] shrink-0 bg-[#10693c]">
        <Flourish />
        <TitleBar />
        <MenuTabs />
      </header>
      <div className="shrink-0"><Ribbon /></div>
      <div className="shrink-0"><FormulaBar /></div>
      <Worksheet />
      <div className="shrink-0"><SheetTabs /></div>
      <div className="shrink-0"><StatusBar /></div>
      <div className="flex h-[29px] shrink-0 items-center justify-end pr-3 font-[family-name:'Liberation_Sans',sans-serif] text-[13px] text-white">
        <time>2024/10/26 10:29:38</time>
      </div>
    </div>
  );
}
